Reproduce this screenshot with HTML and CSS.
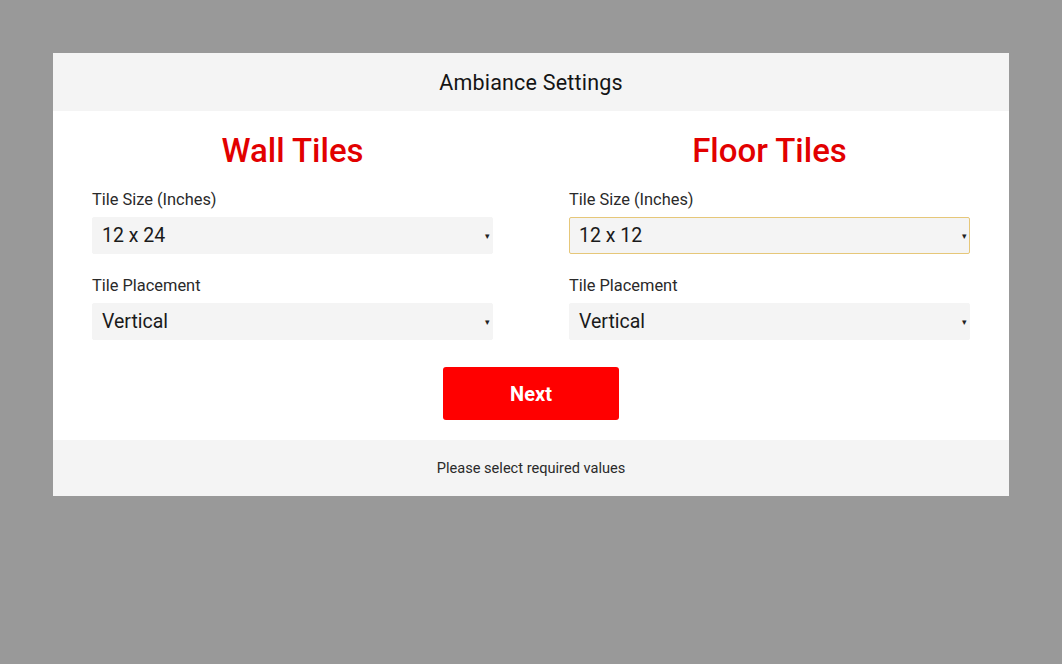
FILE: index.html
```html
<!DOCTYPE html>
<html>
<head>
<meta charset="utf-8">
<link rel="stylesheet" href="styles.css">
</head>
<body>
<div class="modal">
  <div class="modal-header">Ambiance Settings</div>
  <div class="modal-body">
    <div class="columns">
      <div class="col">
        <h2 class="col-title">Wall Tiles</h2>
        <label class="field-label">Tile Size (Inches)</label>
        <div class="select"><span class="select-value">12 x 24</span><span class="arrow">▾</span></div>
        <label class="field-label">Tile Placement</label>
        <div class="select"><span class="select-value">Vertical</span><span class="arrow">▾</span></div>
      </div>
      <div class="col">
        <h2 class="col-title">Floor Tiles</h2>
        <label class="field-label">Tile Size (Inches)</label>
        <div class="select focused"><span class="select-value">12 x 12</span><span class="arrow">▾</span></div>
        <label class="field-label">Tile Placement</label>
        <div class="select"><span class="select-value">Vertical</span><span class="arrow">▾</span></div>
      </div>
    </div>
    <div class="actions">
      <button class="btn-next">Next</button>
    </div>
  </div>
  <div class="modal-footer">Please select required values</div>
</div>
</body>
</html>
```
FILE: styles.css
```css
html, body {
  margin: 0;
  padding: 0;
}
body {
  background: #999999;
  font-family: Roboto, "Liberation Sans", sans-serif;
  width: 1062px;
  height: 664px;
  overflow: hidden;
}
.modal {
  margin: 53px 0 0 53px;
  width: 956px;
  background: #ffffff;
  display: flex;
  flex-direction: column;
}
.modal-header {
  height: 58px;
  background: #f4f4f4;
  display: flex;
  align-items: center;
  justify-content: center;
  font-size: 21.5px;
  font-weight: 400;
  color: #141414;
  letter-spacing: 0.2px;
  padding-top: 1px;
  box-sizing: border-box;
}
.modal-body {
  padding: 19px 39px 20px 39px;
}
.columns {
  display: flex;
  gap: 76px;
}
.col {
  flex: 1;
  display: flex;
  flex-direction: column;
}
.col-title {
  margin: 0 0 19px 0;
  text-align: center;
  font-size: 33px;
  font-weight: 500;
  color: #e20000;
  line-height: 40px;
  padding-top: 1px;
}
.field-label {
  font-size: 16.4px;
  color: #2a2a2a;
  line-height: 20px;
  margin-bottom: 7px;
}
.select {
  position: relative;
  height: 37px;
  box-sizing: border-box;
  background: #f4f4f4;
  border: 1px solid #f4f4f4;
  border-radius: 2px;
  display: flex;
  align-items: center;
  padding-left: 9px;
  margin-bottom: 22px;
  font-size: 19.5px;
  color: #1a1a1a;
}
.select:last-child {
  margin-bottom: 0;
}
.select.focused {
  border-color: #e6c779;
}
.arrow {
  position: absolute;
  right: 2px;
  top: 50%;
  transform: translateY(-52%);
  font-size: 9px;
  color: #222;
}
.actions {
  display: flex;
  justify-content: center;
  margin-top: 27px;
}
.btn-next {
  width: 176px;
  height: 53px;
  background: #ff0000;
  border: none;
  border-radius: 3px;
  color: #ffffff;
  font-family: Roboto, "Liberation Sans", sans-serif;
  font-size: 20px;
  font-weight: 700;
}
.modal-footer {
  height: 56px;
  background: #f4f4f4;
  display: flex;
  align-items: center;
  justify-content: center;
  font-size: 14.6px;
  color: #2a2a2a;
}
```
